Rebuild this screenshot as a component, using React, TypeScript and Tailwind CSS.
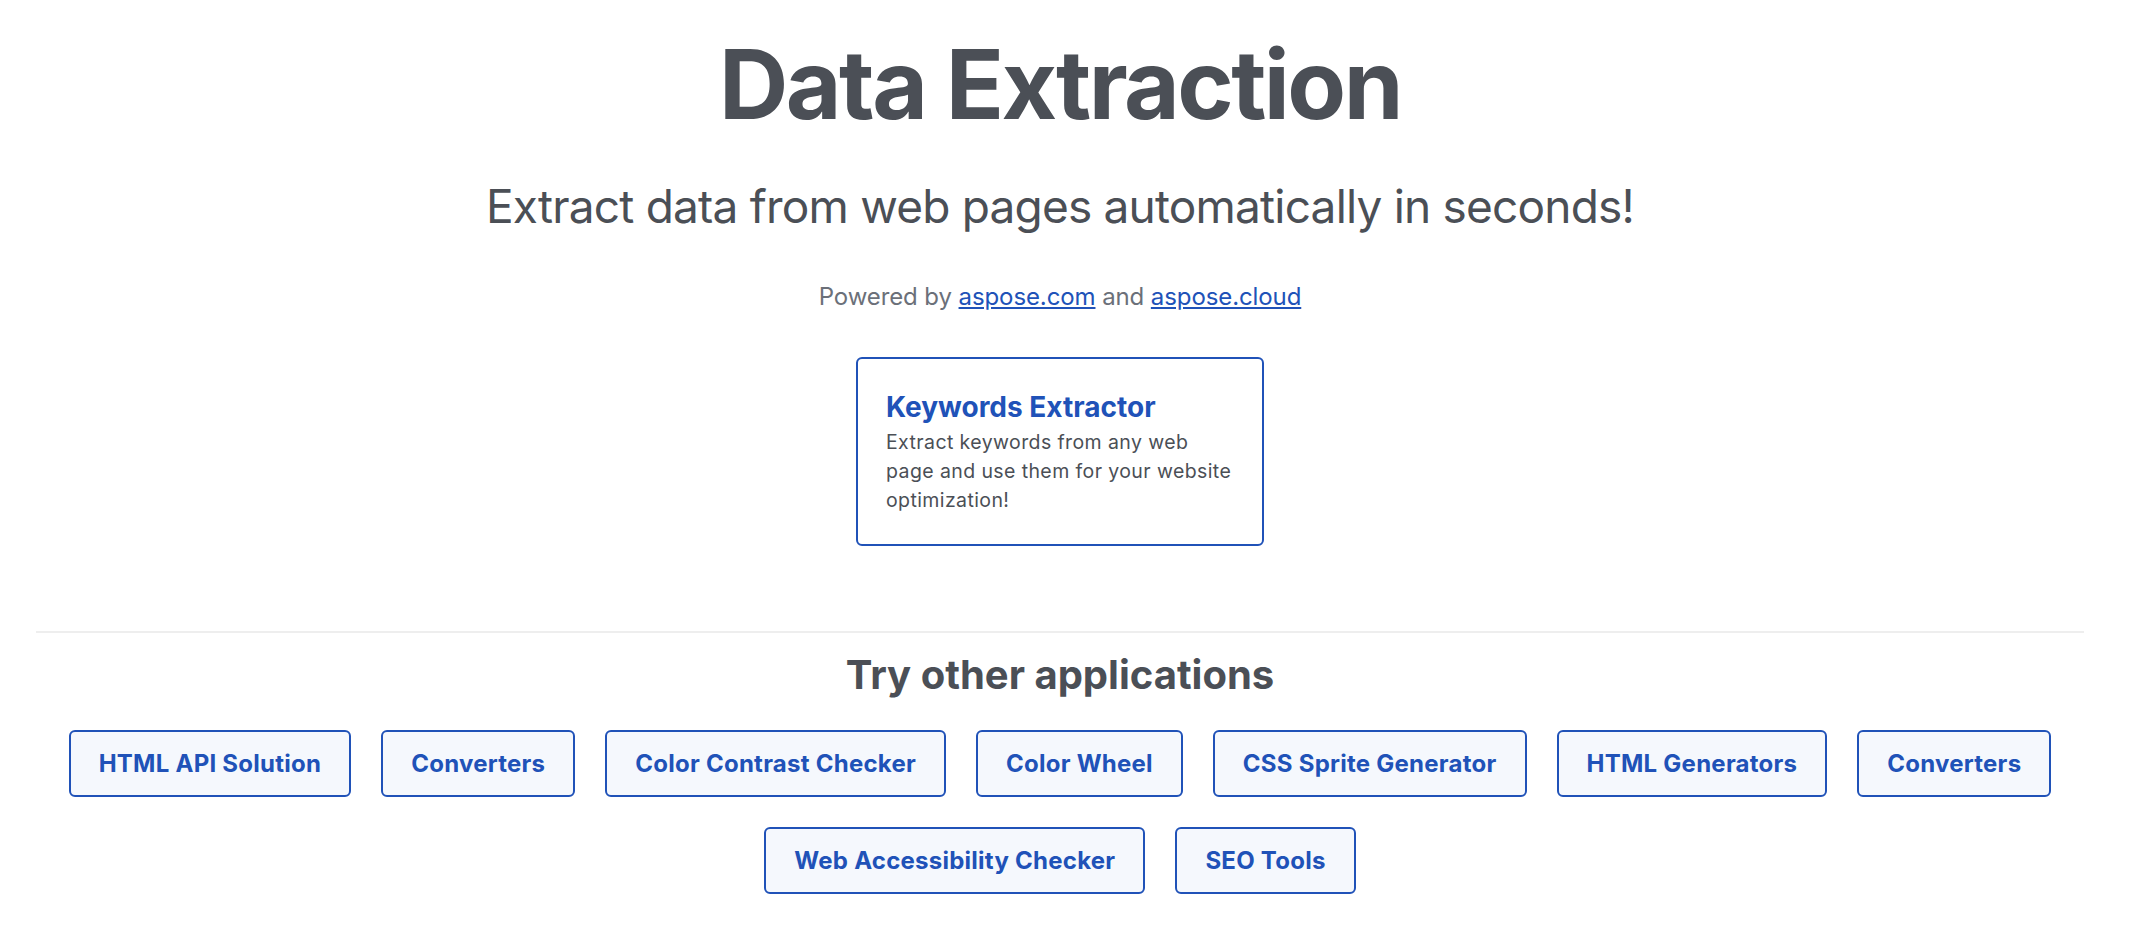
import React from "react";

const apps = [
  "HTML API Solution",
  "Converters",
  "Color Contrast Checker",
  "Color Wheel",
  "CSS Sprite Generator",
  "HTML Generators",
  "Converters",
  "Web Accessibility Checker",
  "SEO Tools",
];

const App = () => {
  return (
    <div className="w-[2120px] min-h-[934px] bg-white font-['Inter','Noto_Sans',sans-serif] text-[#4b4f56]">
      <div className="flex flex-col items-center">
        <h1 className="pt-[26px] text-[96px] leading-[116px] font-bold tracking-[-2.5px]">
          Data Extraction
        </h1>
        <p className="mt-[36px] text-[46px] leading-[56px] font-normal tracking-[-0.8px]">
          Extract data from web pages automatically in seconds!
        </p>
        <p className="mt-[48px] text-[24px] leading-[29px] text-[#6b7079] tracking-[-0.1px]">
          Powered by{" "}
          <a href="#" className="text-[#2052b8] underline">
            aspose.com
          </a>{" "}
          and{" "}
          <a href="#" className="text-[#2052b8] underline">
            aspose.cloud
          </a>
        </p>
        <a
          href="#"
          className="mt-[46px] w-[408px] rounded-[6px] border-2 border-[#2052b8] px-[28px] pt-[31px] pb-[29px]"
        >
          <h3 className="text-[28px] leading-[34px] font-bold text-[#2052b8]">
            Keywords Extractor
          </h3>
          <p className="mt-[4px] text-[19.5px] leading-[29px] tracking-[0.4px] text-[#4b4f56]">
            Extract keywords from any web page and use them for your website
            optimization!
          </p>
        </a>
      </div>
      <div className="mx-[36px] mt-[85px] h-[2px] bg-[#eeeeee]" />
      <div className="flex flex-col items-center px-[36px]">
        <h2 className="mt-[18px] text-[40px] leading-[48px] font-bold">
          Try other applications
        </h2>
        <div className="mt-[31px] flex flex-wrap justify-center gap-[30px]">
          {apps.map((each, index) => (
            <a
              key={index}
              href="#"
              className="rounded-[6px] border-2 border-[#2052b8] bg-[#f5f8fd] px-[28px] py-[16px] text-[24px] leading-[31px] font-bold tracking-[0.25px] text-[#2052b8]"
            >
              {each}
            </a>
          ))}
        </div>
      </div>
    </div>
  );
};

export default App;
